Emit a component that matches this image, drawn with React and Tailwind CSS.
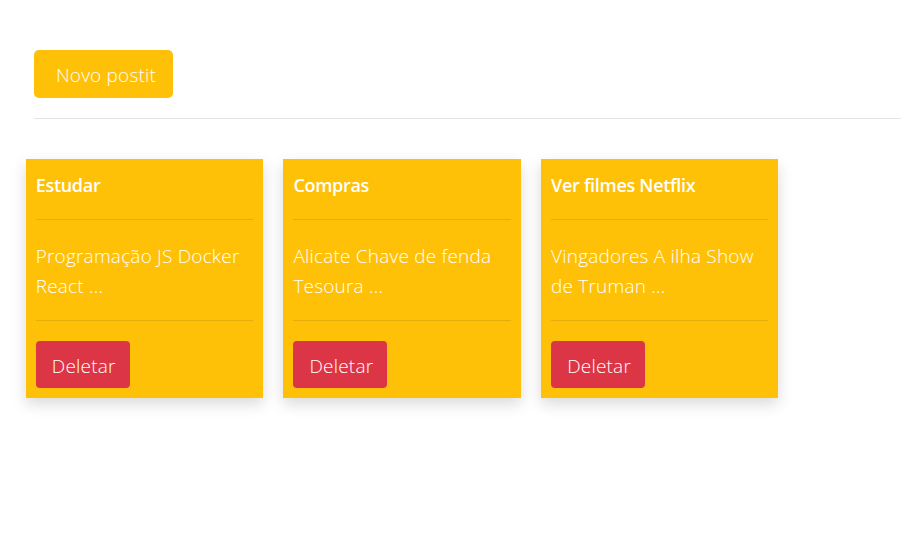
export default function App() {
  const cards = [
    { t: "Estudar", b: "Programação JS Docker React ..." },
    { t: "Compras", b: "Alicate Chave de fenda Tesoura ..." },
    { t: "Ver filmes Netflix", b: "Vingadores A ilha Show de Truman ..." },
  ];
  return (
    <div className="min-h-[556px] bg-white pl-[34px] pt-[50px] overflow-hidden" style={{ fontFamily: '"Open Sans", "Noto Sans", sans-serif' }}>
      <button className="h-[48px] w-[139px] rounded-[5px] bg-[#ffc107] pt-[2px] pl-[5px] text-[19px] font-light tracking-[0.2px] text-white">Novo postit</button>
      <div className="mt-[20px] h-px bg-[#e5e5e5]" />
      <div className="-ml-[8.3px] mt-[40px] flex gap-[20.3px]">
        {cards.map((c) => (
          <div key={c.t} className="flex h-[239px] w-[237.4px] flex-col bg-[#ffc107] p-[10px] text-white shadow-[0_6px_14px_rgba(0,0,0,0.15)]">
            <div className="h-[30px] pt-[1px] text-[18px] font-semibold leading-[30px] tracking-[-0.3px]">{c.t}</div>
            <div className="mt-[20px] h-px bg-[#e6ad06]" />
            <div className="h-[100px] pt-[21px] pb-[19px] text-[19px] font-light leading-[30px] tracking-[0.2px]">{c.b}</div>
            <div className="h-px bg-[#e6ad06]" />
            <button className="mt-[20px] h-[47px] w-[94px] rounded-[4px] bg-[#dc3545] pt-[3px] pl-[2px] text-[19px] font-light tracking-[0.2px] text-white">Deletar</button>
          </div>
        ))}
      </div>
    </div>
  );
}
